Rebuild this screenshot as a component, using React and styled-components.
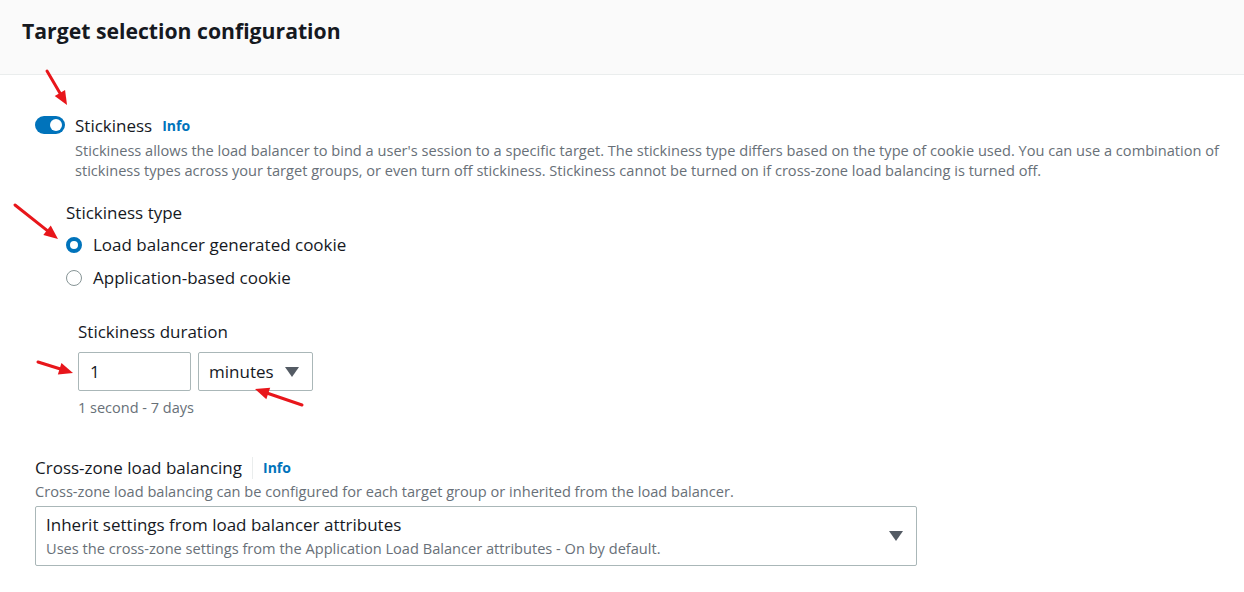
import React from "react";
import styled, { createGlobalStyle } from "styled-components";

const Global = createGlobalStyle`
  html, body { margin: 0; padding: 0; background: #ffffff; }
  body { font-family: "Open Sans", "Noto Sans", Arial, sans-serif; color: #16191f; }
  * { box-sizing: border-box; }
`;

const Page = styled.div`
  position: relative;
  width: 1244px;
  height: 592px;
  overflow: hidden;
  background: #fff;
`;

const Header = styled.div`
  height: 75px;
  background: #fafafa;
  border-bottom: 1px solid #eaeded;
  padding: 16px 22px 0;
`;

const Title = styled.h2`
  margin: 0;
  font-size: 21.2px;
  font-weight: 700;
  line-height: 30px;
  color: #16191f;
`;

const Body = styled.div`
  padding: 40px 0 0 35px;
  display: flex;
  flex-direction: column;
`;

const ToggleRow = styled.div`
  display: flex;
  gap: 10px;
`;

const Switch = styled.div`
  width: 30px;
  height: 18px;
  margin-top: 1px;
  border-radius: 9px;
  background: #0073bb;
  position: relative;
  flex: none;
  &::after {
    content: "";
    position: absolute;
    right: 3px;
    top: 3px;
    width: 12px;
    height: 12px;
    border-radius: 50%;
    background: #fff;
  }
`;

const ToggleText = styled.div`
  display: flex;
  flex-direction: column;
`;

const LabelLine = styled.div`
  display: flex;
  align-items: center;
  gap: 10px;
  font-size: 17px;
  line-height: 22px;
  color: #16191f;
`;

const Info = styled.span`
  font-size: 14px;
  font-weight: 700;
  color: #0073bb;
  ${(p) =>
    p.$divided &&
    `border-left: 1px solid #eaeded; padding-left: 10px; line-height: 22px;`}
`;

const Desc = styled.p`
  margin: ${(p) => p.$mt || 0}px 0 0;
  font-size: 14.6px;
  line-height: 20px;
  color: #687078;
  max-width: 1160px;
`;

const TypeGroup = styled.div`
  margin: 22px 0 0 31px;
  display: flex;
  flex-direction: column;
`;

const Label = styled.div`
  font-size: 17px;
  line-height: 22px;
  color: #16191f;
`;

const RadioRow = styled.label`
  display: flex;
  align-items: center;
  gap: 11px;
  height: 33px;
  margin-top: ${(p) => p.$mt || 0}px;
  font-size: 17px;
  color: #16191f;
`;

const Radio = styled.span`
  width: 16px;
  height: 16px;
  border-radius: 50%;
  flex: none;
  border: ${(p) => (p.$checked ? "4.5px solid #0073bb" : "1.5px solid #879596")};
  background: #fff;
`;

const Duration = styled.div`
  margin: 27px 0 0 12px;
  display: flex;
  flex-direction: column;
`;

const Fields = styled.div`
  display: flex;
  gap: 7px;
  margin-top: 9px;
`;

const Input = styled.div`
  width: 113px;
  height: 39px;
  border: 1px solid #aab7b8;
  border-radius: 2px;
  padding: 0 11px;
  display: flex;
  align-items: center;
  font-size: 17px;
  color: #16191f;
`;

const Select = styled.div`
  width: ${(p) => p.$w}px;
  height: ${(p) => p.$h}px;
  margin-top: ${(p) => p.$mt || 0}px;
  border: 1px solid #aab7b8;
  border-radius: 2px;
  padding: 0 13px 0 10px;
  display: flex;
  align-items: center;
  justify-content: space-between;
  font-size: 17px;
  color: #16191f;
`;

const Caret = styled.span`
  width: 0;
  height: 0;
  border-left: 7px solid transparent;
  border-right: 7px solid transparent;
  border-top: 10px solid #545b64;
`;

const Hint = styled.div`
  margin-top: 7px;
  font-size: 14.5px;
  line-height: 20px;
  color: #687078;
`;

const CrossZone = styled.div`
  margin-top: 39px;
  display: flex;
  flex-direction: column;
`;

const SelectMain = styled.div`
  display: flex;
  flex-direction: column;
  gap: 2px;
`;

const SelTitle = styled.div`
  font-size: 17px;
  line-height: 22px;
`;

const SelSub = styled.div`
  font-size: 14.6px;
  line-height: 20px;
  color: #687078;
`;

const Arrows = styled.svg`
  position: absolute;
  left: 0;
  top: 0;
  pointer-events: none;
`;

function Arrow({ x1, y1, x2, y2 }) {
  const a = Math.atan2(y2 - y1, x2 - x1);
  const L = 14, W = 6;
  const bx = x2 - L * Math.cos(a), by = y2 - L * Math.sin(a);
  const px = -Math.sin(a) * W, py = Math.cos(a) * W;
  return (
    <g>
      <line x1={x1} y1={y1} x2={bx} y2={by} stroke="#e8161b" strokeWidth="3" strokeLinecap="round" />
      <polygon points={`${x2},${y2} ${bx + px},${by + py} ${bx - px},${by - py}`} fill="#e8161b" />
    </g>
  );
}

export default function App() {
  return (
    <Page>
      <Global />
      <Header>
        <Title>Target selection configuration</Title>
      </Header>
      <Body>
        <ToggleRow>
          <Switch />
          <ToggleText>
            <LabelLine>
              Stickiness <Info>Info</Info>
            </LabelLine>
            <Desc $mt={3}>
              Stickiness allows the load balancer to bind a user's session to a specific target. The stickiness type differs based on the type of cookie used. You can use a combination of stickiness types across your target groups, or even turn off stickiness. Stickiness cannot be turned on if cross-zone load balancing is turned off.
            </Desc>
          </ToggleText>
        </ToggleRow>
        <TypeGroup>
          <Label>Stickiness type</Label>
          <RadioRow $mt={4}>
            <Radio $checked /> Load balancer generated cookie
          </RadioRow>
          <RadioRow>
            <Radio /> Application-based cookie
          </RadioRow>
          <Duration>
            <Label>Stickiness duration</Label>
            <Fields>
              <Input>1</Input>
              <Select $w={115} $h={39}>
                minutes <Caret />
              </Select>
            </Fields>
            <Hint>1 second - 7 days</Hint>
          </Duration>
        </TypeGroup>
        <CrossZone>
          <LabelLine>
            Cross-zone load balancing <Info $divided>Info</Info>
          </LabelLine>
          <Desc $mt={2}>
            Cross-zone load balancing can be configured for each target group or inherited from the load balancer.
          </Desc>
          <Select $w={882} $h={60} $mt={5}>
            <SelectMain>
              <SelTitle>Inherit settings from load balancer attributes</SelTitle>
              <SelSub>Uses the cross-zone settings from the Application Load Balancer attributes - On by default.</SelSub>
            </SelectMain>
            <Caret />
          </Select>
        </CrossZone>
      </Body>
      <Arrows width="1244" height="592">
        <Arrow x1={47} y1={71} x2={67} y2={105} />
        <Arrow x1={15} y1={205} x2={58} y2={239} />
        <Arrow x1={38} y1={362} x2={73} y2={373} />
        <Arrow x1={302} y1={405} x2={255} y2={389} />
      </Arrows>
    </Page>
  );
}
